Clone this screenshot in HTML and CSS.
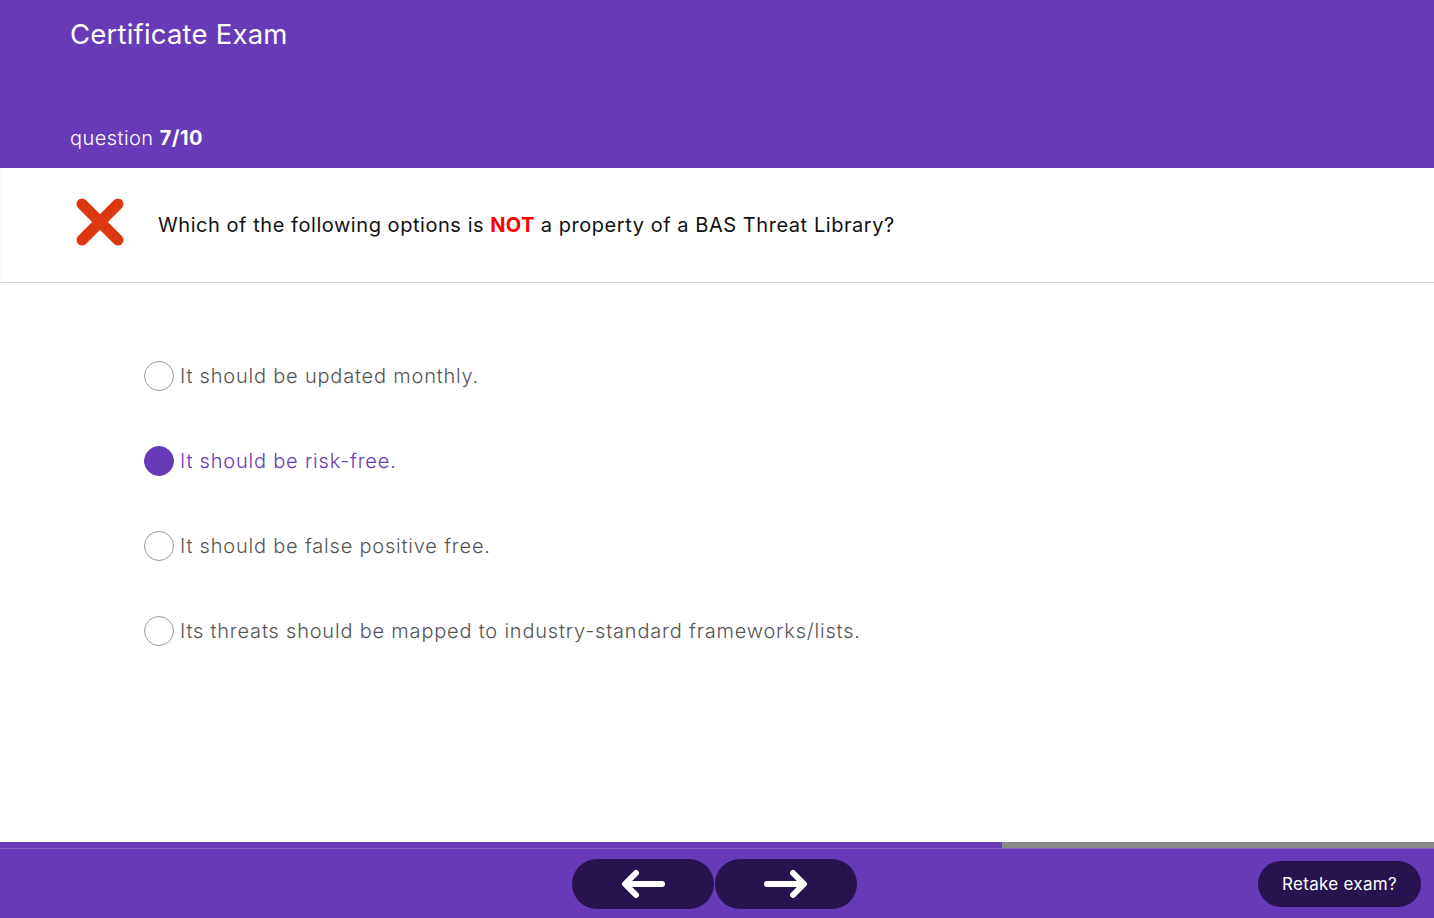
FILE: index.html
```html
<!DOCTYPE html>
<html lang="en">
<head>
<meta charset="utf-8">
<title>Certificate Exam</title>
<link rel="stylesheet" href="styles.css">
</head>
<body>
<div class="page">
  <header class="header">
    <h1 class="title">Certificate Exam</h1>
    <div class="counter">question <b>7/10</b></div>
  </header>
  <section class="question">
    <svg class="wrong" viewBox="0 0 50 50" width="50" height="50" aria-hidden="true">
      <path d="M7 7 L43 43 M43 7 L7 43" stroke="#dc3912" stroke-width="11" stroke-linecap="round" fill="none"/>
    </svg>
    <p class="qtext">Which of the following options is <span class="not">NOT</span> a property of a BAS Threat Library?</p>
  </section>
  <main class="options">
    <label class="option"><span class="radio"></span><span class="otext">It should be updated monthly.</span></label>
    <label class="option selected"><span class="radio"></span><span class="otext">It should be risk-free.</span></label>
    <label class="option"><span class="radio"></span><span class="otext">It should be false positive free.</span></label>
    <label class="option"><span class="radio"></span><span class="otext">Its threats should be mapped to industry-standard frameworks/lists.</span></label>
  </main>
  <div class="progress"><div class="progress-fill" style="width:69.9%"></div></div>
  <footer class="footer">
    <div class="spacer"></div>
    <div class="nav">
      <button class="navbtn" aria-label="Previous">
        <svg viewBox="0 0 46 30" width="46" height="30" aria-hidden="true"><path d="M42 15 H6 M16 4 L5 15 L16 26" stroke="#fff" stroke-width="6" stroke-linecap="round" stroke-linejoin="round" fill="none"/></svg>
      </button>
      <button class="navbtn" aria-label="Next">
        <svg viewBox="0 0 46 30" width="46" height="30" aria-hidden="true"><path d="M4 15 H40 M30 4 L41 15 L30 26" stroke="#fff" stroke-width="6" stroke-linecap="round" stroke-linejoin="round" fill="none"/></svg>
      </button>
    </div>
    <div class="right">
      <button class="retake">Retake exam?</button>
    </div>
  </footer>
</div>
</body>
</html>
```

FILE: styles.css
```css
* { box-sizing: border-box; }
html, body { margin: 0; padding: 0; }
body {
  font-family: Inter, "Noto Sans", sans-serif;
  background: #fff;
}
.page {
  height: 100vh;
  display: flex;
  flex-direction: column;
}
.header {
  height: 168px;
  background: #673ab7;
  color: #fff;
  padding: 16px 70px 17px;
  display: flex;
  flex-direction: column;
  justify-content: space-between;
}
.title {
  margin: 0;
  font-size: 27.5px;
  font-weight: 400;
  line-height: 36px;
  letter-spacing: 0.2px;
}
.counter {
  font-size: 20px;
  line-height: 26px;
  letter-spacing: 0.45px;
  font-weight: 300;
}
.counter b { font-weight: 700; }
.question {
  height: 115px;
  border-bottom: 1px solid #cfcfcf;
  display: flex;
  align-items: center;
  padding-left: 75px;
  padding-bottom: 1px;
  box-shadow: inset 2px 0 2px -1px rgba(0,0,0,0.04);
}
.wrong { flex: none; margin-top: -6px; }
.qtext {
  margin: 0 0 0 33px;
  font-size: 20px;
  letter-spacing: 0.55px;
  color: #111;
  font-weight: 400;
}
.not { color: #ff0000; font-weight: 700; letter-spacing: 0.3px; }
.options {
  flex: 1;
  display: flex;
  flex-direction: column;
  gap: 55px;
  padding: 78px 0 0 144px;
}
.option {
  display: flex;
  align-items: center;
  height: 30px;
  color: #555;
  cursor: pointer;
}
.radio {
  width: 30px;
  height: 30px;
  border-radius: 50%;
  border: 1.5px solid #9a9a9a;
  flex: none;
  margin-right: 6px;
}
.otext {
  font-size: 20px;
  letter-spacing: 0.8px;
  font-weight: 300;
}
.option.selected { color: #673ab7; }
.option.selected .radio { background: #673ab7; border-color: #673ab7; }
.progress {
  height: 6px;
  background: #888888;
}
.progress-fill {
  height: 100%;
  background: #673ab7;
}
.footer {
  height: 70px;
  background: #673ab7;
  border-top: 1px solid #8360c3;
  display: grid;
  grid-template-columns: 1fr auto 1fr;
  align-items: center;
}
.nav {
  display: flex;
  gap: 1px;
  margin-left: -6px;
}
.navbtn {
  width: 142px;
  height: 50px;
  border: none;
  border-radius: 25px;
  background: #261350;
  display: flex;
  align-items: center;
  justify-content: center;
  padding: 0;
  cursor: pointer;
}
.right {
  display: flex;
  justify-content: flex-end;
  padding-right: 13px;
}
.retake {
  width: 163px;
  height: 46px;
  border: none;
  border-radius: 23px;
  background: #261350;
  color: #fff;
  font-family: Inter, "Noto Sans", sans-serif;
  font-size: 17px;
  letter-spacing: 0.3px;
  cursor: pointer;
}
```
